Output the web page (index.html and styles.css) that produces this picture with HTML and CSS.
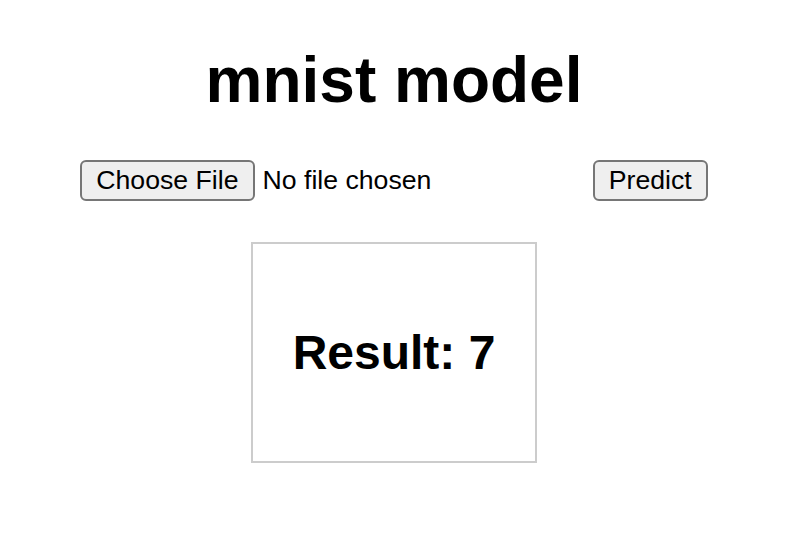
FILE: index.html
```html
<!DOCTYPE html>
<html lang="en">
  <head>
    <meta charset="UTF-8" />
    <meta name="viewport" content="width=device-width, initial-scale=1.0" />
    <title>mnist model</title>
    <link rel="stylesheet" href="styles.css">
  </head>
  <body>
    <h1 class="tit">mnist model</h1>

    <!-- 이미지 업로드 + 예측 버튼 -->
    <form class="upload" onsubmit="return false">
      <input type="file" class="file-in" id="img" accept="image/*" />
      <button type="button" class="sbtn">Predict</button>
    </form>

    <!-- 결과 박스 -->
    <div class="result">
      <h2 class="res-txt">Result: 7</h2>
    </div>
  </body>
</html>
```

FILE: styles.css
```css
body {
  margin: 0 16px 16px;
  font-family: "Liberation Sans", Arial, sans-serif;
  text-align: center;
  color: #000;
}

.tit {
  font-size: 64px;
  margin: 42.9px 0;
}

/* 업로드 줄 */
.upload {
  display: flex;
  justify-content: space-around;
  align-items: center;
  margin: 0 0 41px;
}

.file-in {
  width: 384px;
  padding: 0;
  border: 0;
  font-family: "Liberation Sans", Arial, sans-serif;
  font-size: 26.67px;
  text-align: left;
}

.sbtn,
.file-in::file-selector-button {
  box-sizing: border-box;
  height: 41.5px;
  font-family: "Liberation Sans", Arial, sans-serif;
  font-size: 26.67px;
  line-height: 31px;
  padding: 3px 14px;
  border: 2px solid #767676;
  border-radius: 6px;
  background: #efefef;
  color: #000;
}

.file-in::file-selector-button {
  margin-right: 8px;
}

/* 결과 박스 */
.result {
  display: inline-block;
  padding: 0 40px;
  border: 2px solid #ccc;
}

.res-txt {
  font-size: 48px;
  margin: 81px 0;
}
```
